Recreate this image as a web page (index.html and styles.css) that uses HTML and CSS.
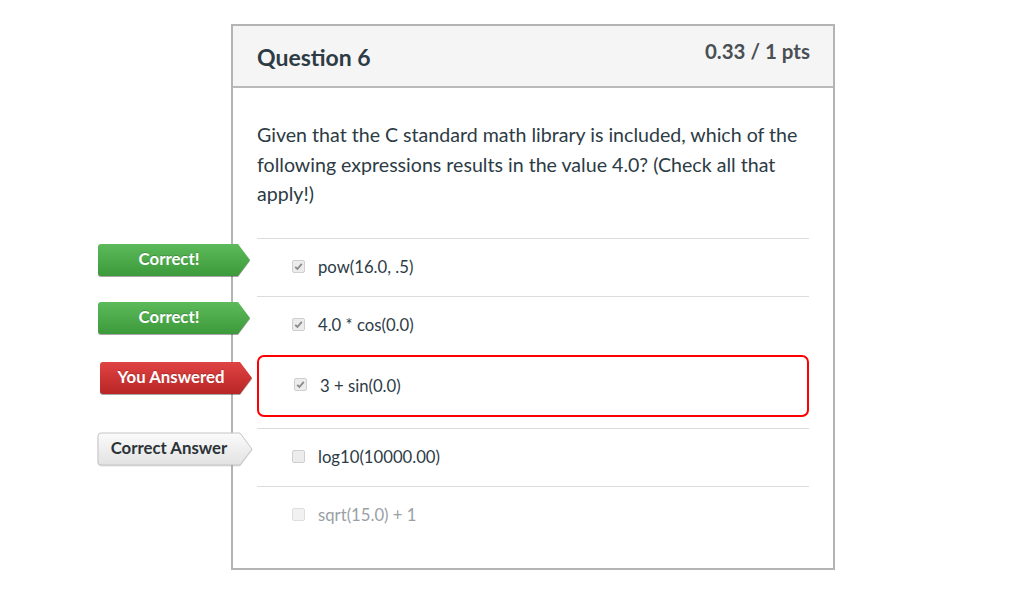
FILE: index.html
```html
<!DOCTYPE html>
<html lang="en">
<head>
<meta charset="utf-8">
<title>Question 6</title>
<link rel="stylesheet" href="styles.css">
</head>
<body>
<div class="page">
  <div class="card">
    <div class="card-header">
      <h2 class="title">Question 6</h2>
      <div class="pts">0.33 / 1 pts</div>
    </div>
    <div class="card-body">
      <p class="question">Given that the C standard math library is included, which of the following expressions results in the value 4.0? (Check all that apply!)</p>
      <div class="answers">
        <div class="answer">
          <div class="flag flag-green">
            <svg class="flag-shape" viewBox="0 0 152 32" width="152" height="32"><defs><linearGradient id="g1" x1="0" y1="0" x2="0" y2="1"><stop offset="0" stop-color="#5cba5a"/><stop offset="1" stop-color="#3c9a3b"/></linearGradient></defs><path d="M3 0H140L152 16L140 32H3Q0 32 0 29V3Q0 0 3 0Z" fill="url(#g1)"/></svg>
            <span class="flag-text">Correct!</span>
          </div>
          <span class="checkbox checked"><svg viewBox="0 0 13 13" width="13" height="13"><path d="M3.2 6.8L5.4 9L9.8 3.8" fill="none" stroke="#8a8a8a" stroke-width="1.8"/></svg></span>
          <span class="answer-text">pow(16.0, .5)</span>
        </div>
        <div class="answer">
          <div class="flag flag-green">
            <svg class="flag-shape" viewBox="0 0 152 32" width="152" height="32"><defs><linearGradient id="g2" x1="0" y1="0" x2="0" y2="1"><stop offset="0" stop-color="#5cba5a"/><stop offset="1" stop-color="#3c9a3b"/></linearGradient></defs><path d="M3 0H140L152 16L140 32H3Q0 32 0 29V3Q0 0 3 0Z" fill="url(#g2)"/></svg>
            <span class="flag-text">Correct!</span>
          </div>
          <span class="checkbox checked"><svg viewBox="0 0 13 13" width="13" height="13"><path d="M3.2 6.8L5.4 9L9.8 3.8" fill="none" stroke="#8a8a8a" stroke-width="1.8"/></svg></span>
          <span class="answer-text">4.0 * cos(0.0)</span>
        </div>
        <div class="answer answer-wrong">
          <div class="flag flag-red">
            <svg class="flag-shape" viewBox="0 0 152 32" width="152" height="32"><defs><linearGradient id="g3" x1="0" y1="0" x2="0" y2="1"><stop offset="0" stop-color="#df4443"/><stop offset="1" stop-color="#b92525"/></linearGradient></defs><path d="M3 0H140L152 16L140 32H3Q0 32 0 29V3Q0 0 3 0Z" fill="url(#g3)"/></svg>
            <span class="flag-text">You Answered</span>
          </div>
          <span class="checkbox checked"><svg viewBox="0 0 13 13" width="13" height="13"><path d="M3.2 6.8L5.4 9L9.8 3.8" fill="none" stroke="#8a8a8a" stroke-width="1.8"/></svg></span>
          <span class="answer-text">3 + sin(0.0)</span>
        </div>
        <div class="answer">
          <div class="flag flag-gray">
            <svg class="flag-shape" viewBox="0 0 156 34" width="156" height="34"><defs><linearGradient id="g4" x1="0" y1="0" x2="0" y2="1"><stop offset="0" stop-color="#fbfbfb"/><stop offset="1" stop-color="#e2e2e2"/></linearGradient></defs><path d="M4 1H143L155 17L143 33H4Q1 33 1 30V4Q1 1 4 1Z" fill="url(#g4)" stroke="#c4c4c4" stroke-width="1"/></svg>
            <span class="flag-text">Correct Answer</span>
          </div>
          <span class="checkbox"></span>
          <span class="answer-text">log10(10000.00)</span>
        </div>
        <div class="answer answer-muted">
          <span class="checkbox faint"></span>
          <span class="answer-text">sqrt(15.0) + 1</span>
        </div>
      </div>
    </div>
  </div>
</div>
</body>
</html>
```
FILE: styles.css
```css
* { box-sizing: border-box; }
html, body { margin: 0; padding: 0; background: #fff; }
body { font-family: Lato, "Open Sans", "Liberation Sans", sans-serif; color: #2d3b45; }

.page { padding: 24px 0 0 231px; }

.card {
  width: 604px;
  border: 2px solid #b4b4b4;
  background: #fff;
}

.card-header {
  display: flex;
  justify-content: space-between;
  align-items: flex-start;
  height: 62px;
  padding: 0 23px 0 24px;
  background: #f5f5f5;
  border-bottom: 2px solid #b9b9b9;
}
.title {
  margin: 0;
  align-self: center;
  margin-top: 2px;
  font-size: 23px;
  line-height: 28px;
  font-weight: 700;
  color: #2d3b45;
}
.pts {
  margin-top: 12px;
  font-size: 20.5px;
  line-height: 26px;
  font-weight: 700;
  color: #4a4f54;
}

.card-body { padding: 32px 24px 24px 24px; }

.question {
  margin: 0 0 29px 0;
  font-size: 19.6px;
  line-height: 29.6px;
  color: #2d3b45;
}

.answers { display: flex; flex-direction: column; }

.answer {
  position: relative;
  display: flex;
  align-items: center;
  gap: 13px;
  height: 58px;
  padding-left: 35px;
  border-top: 1px solid #dcdcdc;
}
.answer-wrong {
  height: 62px;
  margin: 1px 0 11px 0;
  border: 2px solid #f00;
  border-radius: 7px;
  padding-left: 35px;
}
.answer-wrong + .answer { border-top: 1px solid #dcdcdc; }

.checkbox {
  display: inline-flex;
  width: 13px;
  height: 13px;
  margin-top: -2px;
  border: 1px solid #cfcfcf;
  border-radius: 2px;
  background: #ececec;
  flex-shrink: 0;
}
.checkbox svg { display: block; margin: -1px; }
.checkbox.faint { background: #f1f1f1; border-color: #dedede; }

.answer-text {
  font-size: 16.7px;
  line-height: 20px;
  color: #2d3b45;
}
.answer-muted .answer-text { color: #9aa0a5; }

.flag {
  position: absolute;
  left: -159px;
  top: 5px;
  width: 152px;
  height: 32px;
  display: flex;
  align-items: center;
}
.flag-shape {
  position: absolute;
  left: 0;
  top: 0;
  filter: drop-shadow(0 1px 0.5px rgba(0,0,0,0.35));
}
.flag-text {
  position: relative;
  width: 142px;
  text-align: center;
  font-size: 16.8px;
  font-weight: 700;
  line-height: 20px;
  margin-top: -2px;
  color: #fff;
  text-shadow: 0 -1px 0 rgba(0,0,0,0.2);
}
.flag-gray { left: -160px; top: 3px; width: 156px; height: 34px; }
.flag-gray .flag-shape { filter: drop-shadow(0 1px 0.5px rgba(0,0,0,0.12)); }
.flag-gray .flag-text {
  width: 144px;
  color: #2b3338;
  text-shadow: none;
}
```
